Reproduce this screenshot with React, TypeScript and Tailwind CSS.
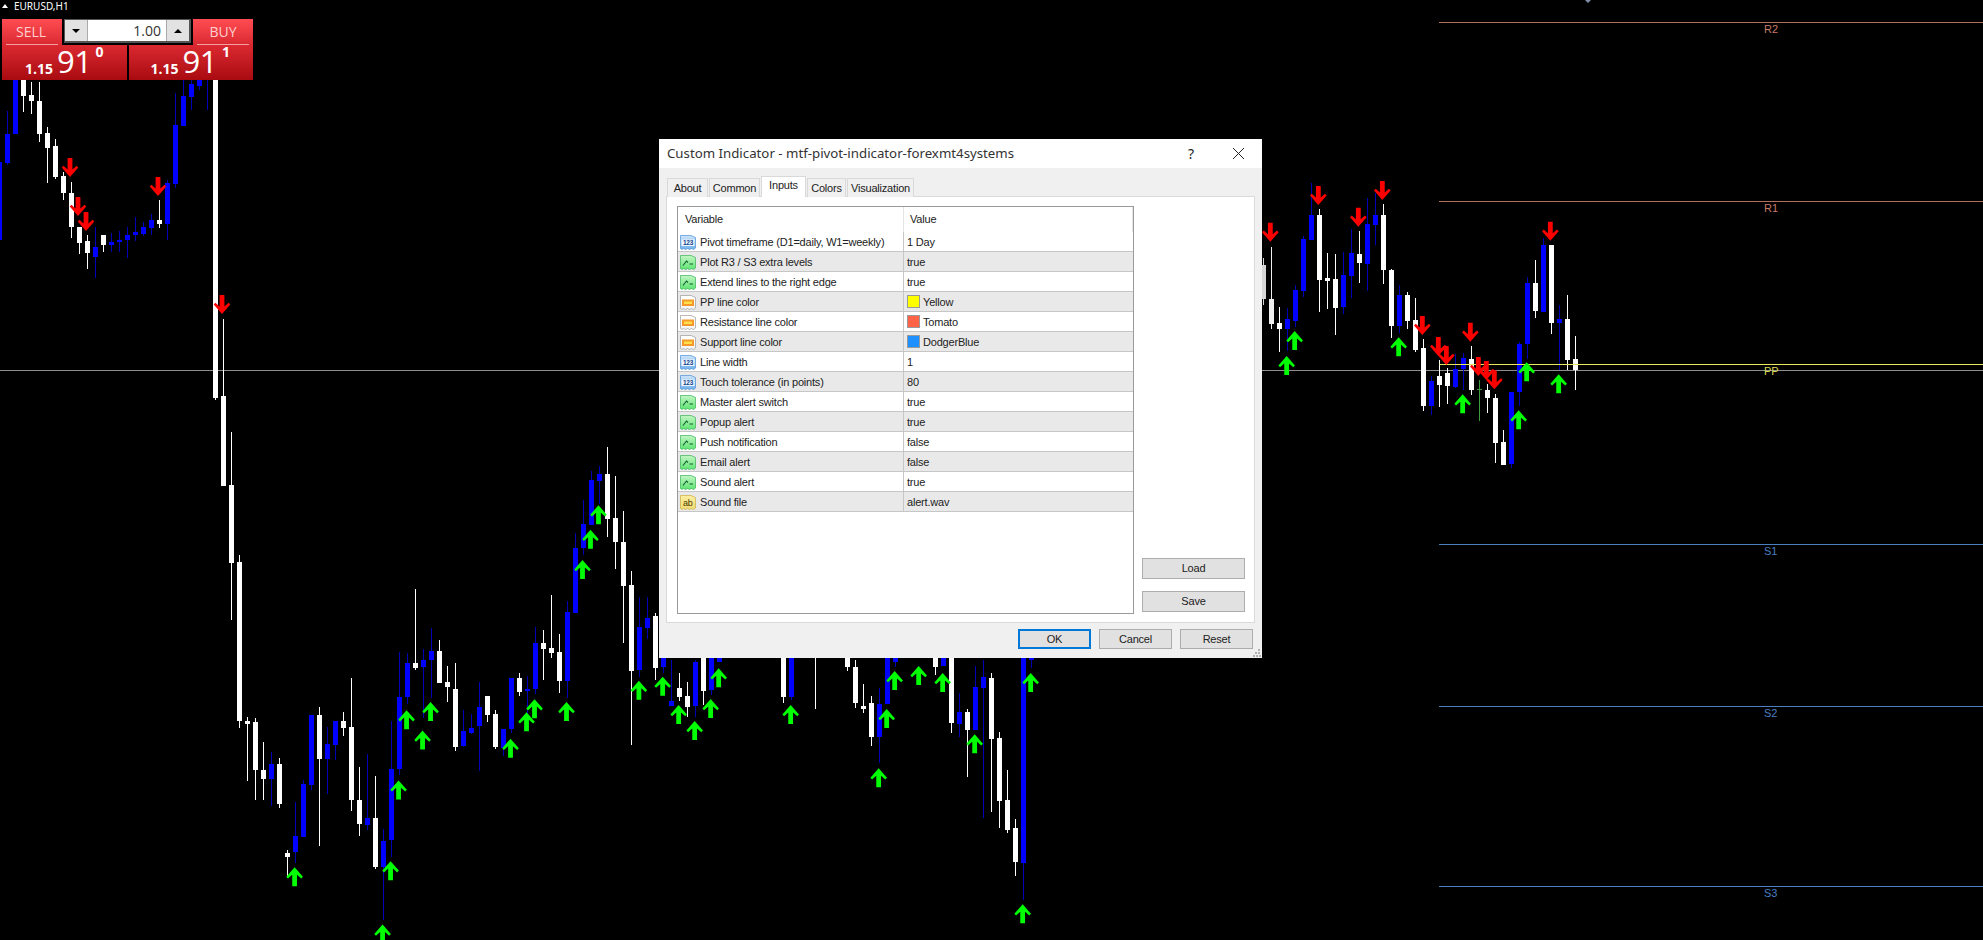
import React from "react";

type C = [number, string, number, number, number, number];

const cx = (n: number) => 8 * n - 3;

const real: C[] = [
  [0, "b", 162, 240, 160, 240],
  [1, "b", 134, 163, 111, 165],
  [2, "b", 80, 134, 80, 134],
  [3, "w", 80, 96, 80, 112],
  [4, "w", 95, 101, 82, 114],
  [5, "w", 101, 134, 82, 142],
  [6, "w", 133, 148, 127, 183],
  [7, "w", 146, 177, 139, 179],
  [8, "w", 176, 193, 172, 200],
  [9, "w", 193, 227, 182, 238],
  [10, "w", 227, 243, 227, 254],
  [11, "w", 241, 253, 235, 269],
  [12, "b", 247, 257, 227, 278],
  [13, "w", 235, 245, 235, 252],
  [14, "b", 242, 245, 233, 252],
  [15, "b", 240, 242, 231, 252],
  [16, "b", 235, 240, 227, 258],
  [17, "b", 232, 235, 217, 241],
  [18, "b", 227, 234, 222, 236],
  [19, "b", 220, 228, 214, 235],
  [20, "w", 220, 224, 200, 228],
  [21, "b", 183, 224, 180, 240],
  [22, "b", 125, 184, 93, 188],
  [23, "b", 96, 126, 80, 126],
  [24, "b", 84, 97, 80, 110],
  [25, "b", 80, 86, 80, 90],
  [26, "b", 78, 80, 80, 110],
  [27, "w", 70, 398, 70, 400],
  [83, "b", 655, 667, 655, 673],
  [84, "b", 701, 706, 660, 706],
  [85, "w", 688, 697, 673, 701],
  [86, "w", 696, 707, 682, 717],
  [87, "b", 662, 706, 660, 717],
  [88, "w", 655, 691, 655, 705],
  [89, "b", 655, 690, 655, 695],
  [90, "b", 655, 662, 655, 662],
  [98, "w", 655, 697, 655, 703],
  [99, "b", 655, 697, 655, 700],
  [102, "w", 655, 655, 655, 709],
  [106, "w", 655, 667, 655, 671],
  [107, "w", 667, 703, 660, 708],
  [108, "w", 706, 709, 684, 713],
  [109, "w", 703, 737, 696, 746],
  [110, "b", 704, 737, 688, 763],
  [111, "b", 655, 704, 655, 704],
  [112, "b", 655, 662, 655, 667],
  [117, "w", 655, 667, 655, 675],
  [118, "b", 655, 666, 655, 666],
  [119, "w", 655, 723, 655, 733],
  [120, "b", 712, 724, 693, 737],
  [121, "w", 712, 730, 709, 777],
  [122, "b", 687, 730, 666, 730],
  [123, "b", 677, 688, 660, 818],
  [124, "w", 678, 739, 673, 812],
  [125, "w", 738, 801, 732, 828],
  [126, "w", 800, 830, 770, 833],
  [127, "w", 828, 862, 819, 876],
  [128, "b", 655, 863, 655, 900],
  [129, "b", 655, 660, 655, 668],
];

const z6: C[] = [
  [28, "w", 235, 455, 47, 457],
  [29, "w", 453, 643, 323, 783],
  [30, "w", 643, 1033, 625, 1048],
  [31, "w", 1031, 1039, 1022, 1180],
  [32, "w", 1035, 1153, 1025, 1226],
  [33, "w", 1151, 1173, 1083, 1225],
  [34, "b", 1137, 1173, 1107, 1240],
  [35, "w", 1137, 1235, 1122, 1245],
  [36, "w", 1355, 1366, 1347, 1415],
  [37, "b", 1313, 1352, 1230, 1380],
  [38, "b", 1186, 1315, 1175, 1315],
  [39, "b", 1016, 1187, 1016, 1200],
  [40, "w", 1017, 1125, 997, 1337],
  [41, "b", 1088, 1125, 1045, 1208],
  [42, "b", 1032, 1090, 1032, 1127],
  [43, "w", 1032, 1048, 1010, 1070],
  [44, "w", 1047, 1226, 925, 1252],
  [45, "w", 1225, 1285, 1143, 1312],
  [46, "b", 1268, 1285, 1113, 1298],
  [47, "w", 1268, 1387, 1165, 1392],
  [48, "b", 1325, 1388, 1297, 1520],
  [49, "b", 1150, 1325, 1032, 1365],
  [50, "b", 973, 1150, 863, 1165],
  [51, "b", 890, 973, 865, 990],
  [52, "w", 890, 903, 707, 905],
  [53, "b", 883, 901, 855, 1025],
  [54, "b", 860, 883, 803, 975],
  [55, "w", 860, 938, 832, 938],
  [56, "w", 937, 950, 897, 985],
  [57, "w", 952, 1095, 890, 1105],
  [58, "b", 1057, 1093, 1005, 1095],
  [59, "b", 1048, 1060, 1015, 1065],
  [60, "b", 998, 1045, 937, 1155],
  [61, "w", 970, 1017, 970, 1033],
  [62, "w", 1015, 1097, 1005, 1100],
  [63, "b", 1050, 1097, 1050, 1115],
  [64, "b", 925, 1050, 925, 1060],
  [65, "w", 925, 960, 915, 972],
  [66, "b", 952, 958, 920, 1020],
  [67, "b", 840, 952, 800, 965],
  [68, "w", 840, 855, 808, 930],
  [69, "w", 853, 865, 723, 877],
  [70, "w", 862, 933, 818, 963],
  [71, "b", 765, 935, 737, 975],
  [72, "b", 608, 768, 572, 768],
  [73, "b", 550, 610, 490, 625],
  [74, "b", 440, 550, 418, 550],
  [75, "b", 427, 443, 407, 500],
  [76, "w", 427, 537, 360, 580],
  [77, "w", 535, 595, 430, 657],
  [78, "w", 593, 700, 517, 840],
  [79, "w", 698, 908, 665, 1092],
  [80, "b", 802, 908, 728, 925],
  [81, "b", 778, 803, 728, 830],
  [82, "w", 773, 900, 767, 930],
];

const z5: C[] = [
  [158, "g", 345, 447, 325, 465],
  [159, "h", 447, 522, 290, 537],
  [160, "w", 518, 537, 472, 608],
  [161, "b", 507, 537, 475, 605],
  [162, "b", 420, 513, 405, 530],
  [163, "b", 268, 423, 258, 440],
  [164, "b", 195, 270, 100, 270],
  [165, "w", 195, 390, 178, 488],
  [166, "w", 384, 393, 308, 477],
  [167, "w", 387, 473, 312, 555],
  [168, "b", 375, 471, 305, 490],
  [169, "b", 308, 378, 238, 445],
  [170, "w", 312, 338, 243, 398],
  [171, "b", 222, 342, 145, 425],
  [172, "b", 195, 225, 130, 285],
  [173, "w", 195, 360, 163, 402],
  [174, "w", 360, 528, 357, 565],
  [175, "b", 435, 528, 405, 550],
  [176, "w", 435, 513, 425, 537],
  [177, "w", 510, 600, 445, 608],
  [178, "w", 595, 768, 567, 783],
  [179, "b", 693, 768, 678, 795],
  [180, "w", 678, 705, 630, 770],
  [181, "w", 669, 708, 655, 762],
  [182, "b", 657, 711, 612, 715],
  [183, "b", 625, 657, 610, 720],
  [184, "w", 627, 720, 588, 735],
  [186, "w", 720, 744, 703, 790],
  [187, "w", 744, 878, 732, 938],
  [188, "w", 877, 945, 840, 945],
  [189, "b", 725, 942, 725, 952],
  [190, "b", 582, 727, 577, 768],
  [191, "b", 400, 582, 380, 625],
  [192, "w", 400, 483, 330, 503],
  [193, "b", 285, 487, 265, 487],
  [194, "w", 285, 518, 285, 552],
  [195, "b", 507, 519, 465, 660],
  [196, "w", 507, 630, 435, 660],
  [197, "w", 628, 662, 558, 720],
];

const fromZ6 = (z: number) => 300 + z / 2.45;
const fromZ5 = (z: number) => 150 + z / 3;

const candles: C[] = [
  ...real,
  ...z6.map((c): C => [c[0], c[1], fromZ6(c[2]), fromZ6(c[3]), fromZ6(c[4]), fromZ6(c[5])]),
  ...z5.map((c): C => [c[0], c[1], fromZ5(c[2]), fromZ5(c[3]), fromZ5(c[4]), fromZ5(c[5])]),
];

const bodyColor: Record<string, string> = { w: "#ffffff", b: "#0000ff", g: "#d6d6d6", h: "#efefef" };
const wickColor: Record<string, string> = { w: "#ffffff", b: "#0000b4", g: "#d6d6d6", h: "#efefef" };

const greens: [number, number][] = [
  ...([
    [700, 1390], [928, 1375], [909, 1530], [947, 1177], [966, 1005], [1004, 1055], [1023, 985],
    [1213, 1075], [1251, 1010], [1270, 978], [1346, 985], [1384, 637], [1403, 563], [1422, 503], [1518, 933],
  ] as [number, number][]).map(([x, y]): [number, number] => [x / 2.376, fromZ6(y)]),
  ...([
    [68, 110], [116, 195], [164, 243], [212, 177], [236, 85], [452, 195], [716, 385], [740, 207],
    [764, 93], [836, 78], [908, 99], [1004, 283], [1172, 99], [1148, 793],
  ] as [number, number][]).map(([x, y]): [number, number] => [640 + x / 3, 640 + y / 3]),
  ...([
    [110, 618], [134, 543], [446, 562], [638, 733], [806, 781], [830, 637], [926, 673],
  ] as [number, number][]).map(([x, y]): [number, number] => [1250 + x / 3, 150 + y / 3]),
];

const reds: [number, number][] = [
  [70, 177], [78, 216], [86, 231], [158, 196], [222, 314],
  ...([
    [61, 275], [205, 165], [325, 230], [397, 150], [517, 555], [565, 618], [589, 645], [661, 575],
    [685, 678], [709, 690], [733, 718], [901, 272],
  ] as [number, number][]).map(([x, y]): [number, number] => [1250 + x / 3, 150 + y / 3]),
];

const ARROW = "0,0 8.3,9.4 6.6,11.2 2.4,7.4 2.4,19 -2.4,19 -2.4,7.4 -6.6,11.2 -8.3,9.4";

const levels = [
  { y: 22, c: "#b4705f", label: "R2", lc: "#c87a66", ly: 29 },
  { y: 201, c: "#b4705f", label: "R1", lc: "#c87a66", ly: 208 },
  { y: 544, c: "#4a7fc0", label: "S1", lc: "#4a7fc0", ly: 551 },
  { y: 706, c: "#4a7fc0", label: "S2", lc: "#4a7fc0", ly: 713 },
  { y: 886, c: "#4a7fc0", label: "S3", lc: "#4a7fc0", ly: 893 },
];

function Chart() {
  return (
    <svg className="absolute inset-0" width={1983} height={940} viewBox="0 0 1983 940">
      <rect x={0} y={370} width={1983} height={1} fill="#8e8e8e" shapeRendering="crispEdges" />
      <g shapeRendering="crispEdges">
        {candles.map((c) => (
          <g key={c[0]}>
            <rect x={cx(c[0]) + 2} y={Math.round(c[4])} width={1} height={Math.round(c[5] - c[4])} fill={wickColor[c[1]]} />
            <rect x={cx(c[0])} y={Math.round(c[2])} width={5} height={Math.round(c[3] - c[2])} fill={bodyColor[c[1]]} />
          </g>
        ))}
        <rect x={1479} y={380} width={1} height={41} fill="#3c9c3c" />
        <rect x={1477} y={389} width={5} height={1} fill="#3c9c3c" />
        {levels.map((l) => (
          <rect key={l.label} x={1439} y={l.y} width={544} height={1} fill={l.c} />
        ))}
        <rect x={1439} y={364} width={544} height={1} fill="#e8e85c" />
      </g>
      {greens.map(([x, y], i) => (
        <polygon key={i} points={ARROW} fill="#00ff00" transform={`translate(${x} ${y})`} />
      ))}
      {reds.map(([x, y], i) => (
        <polygon key={i} points={ARROW} fill="#ff0000" transform={`translate(${x} ${y}) scale(1 -1)`} />
      ))}
      <polygon points="1585,0 1591,0 1588,3" fill="#8090a8" />
      {levels.map((l) => (
        <text key={l.label} x={1764} y={l.ly + 4} fontSize={11} fill={l.lc} fontFamily="Liberation Sans, sans-serif">
          {l.label}
        </text>
      ))}
      <text x={1764} y={375} fontSize={11} fill="#dcdc50" fontFamily="Liberation Sans, sans-serif">
        PP
      </text>
    </svg>
  );
}

function TradePanel() {
  return (
    <div className="absolute left-[2px] top-[19px] w-[251px] flex flex-col font-['Open_Sans',sans-serif]">
      <div className="flex h-[26px] items-start">
        <div className="w-[60px] h-[26px] bg-gradient-to-b from-[#ff4c52] to-[#d92830] text-[#ffd0d0] text-[14px] leading-[25px] text-center">
          <div className="mx-[4px] h-[26px] border-b border-[#f4a0a0] pr-[2px]">SELL</div>
        </div>
        <div className="ml-[2px] w-[127px] h-[24px] flex border-r-2 border-b-2 border-t border-l border-[#555] bg-white">
          <div className="w-[23px] bg-[#e2e2e2] border-r border-[#aaa] flex items-center justify-center">
            <div className="w-0 h-0 border-x-[4px] border-x-transparent border-t-[4px] border-t-black" />
          </div>
          <div className="flex-1 text-right pr-[5px] text-[14px] leading-[22px] text-[#333]">1.00</div>
          <div className="w-[23px] bg-[#e2e2e2] border-l border-[#aaa] flex items-center justify-center">
            <div className="w-0 h-0 border-x-[4px] border-x-transparent border-b-[4px] border-b-black" />
          </div>
        </div>
        <div className="ml-[2px] w-[60px] h-[26px] bg-gradient-to-b from-[#ff4c52] to-[#d92830] text-[#ffd0d0] text-[14px] leading-[25px] text-center">
          <div className="mx-[4px] h-[26px] border-b border-[#f4a0a0]">BUY</div>
        </div>
      </div>
      <div className="flex gap-[2px] h-[35px]">
        {[
          ["0", "pl-[23px]", "ml-[4px]"],
          ["1", "pl-[22px]", "ml-[5px]"],
        ].map(([sup, pad, gap]) => (
          <div key={sup} className={`w-[125px] h-[35px] bg-gradient-to-b from-[#dc2830] to-[#a80a10] text-white flex items-end pb-[1px] ${pad}`}>
            <span className="text-[14px] font-bold leading-[20px] mr-[4px]">1.15</span>
            <span className="text-[31px] leading-[35px] tracking-[-0.5px]">91</span>
            <span className={`text-[14px] font-bold leading-[16px] self-start mt-[-1px] ${gap}`}>{sup}</span>
          </div>
        ))}
      </div>
    </div>
  );
}

function Tag({ fill, stroke, id, children }: { fill: [string, string]; stroke: string; id: string; children: React.ReactNode }) {
  return (
    <svg width={16} height={16} viewBox="0 0 16 16" className="shrink-0">
      <defs>
        <linearGradient id={id} x1="0" y1="0" x2="0" y2="1">
          <stop offset="0" stopColor={fill[0]} />
          <stop offset="1" stopColor={fill[1]} />
        </linearGradient>
      </defs>
      <path
        d="M0.5 1.5 H11 L15.5 3.5 V14 L13.5 15.5 L11.5 14.5 L9.5 15.5 L7.5 14.5 L5.5 15.5 L3.5 14.5 L2 15.5 L0.5 14.5 Z"
        fill={`url(#${id})`}
        stroke={stroke}
        strokeWidth={0.7}
      />
      {children}
    </svg>
  );
}

function RowIcon({ kind, i }: { kind: string; i: number }) {
  if (kind === "n")
    return (
      <Tag id={`n${i}`} fill={["#cfe4fa", "#6fb0ec"]} stroke="#4a90d4">
        <rect x={1.5} y={5.5} width={13} height={6.5} fill="#eef6fe" />
        <text x={8} y={11} fontSize={6.5} fontWeight={700} textAnchor="middle" fill="#14458c" fontFamily="Liberation Sans, sans-serif">
          123
        </text>
      </Tag>
    );
  if (kind === "b")
    return (
      <Tag id={`b${i}`} fill={["#c4f6c4", "#5ce472"]} stroke="#38b058">
        <path d="M3 11.5 L6.5 7 L8 8.5 M9.5 10 H13" stroke="#0f5f2f" strokeWidth={1.1} fill="none" />
      </Tag>
    );
  if (kind === "c")
    return (
      <Tag id={`c${i}`} fill={["#ffffff", "#f4f4f4"]} stroke="#9a9a9a">
        <rect x={2} y={5.5} width={12} height={6.5} fill="#f59a2a" />
        <rect x={4} y={7.5} width={8} height={2.5} fill="#ffe04a" />
      </Tag>
    );
  return (
    <Tag id={`s${i}`} fill={["#fbeea0", "#f0dc74"]} stroke="#c8ac40">
      <text x={7.8} y={11.5} fontSize={9} textAnchor="middle" fill="#4d3b00" fontFamily="Liberation Sans, sans-serif">
        ab
      </text>
    </Tag>
  );
}

const rows: { k: string; name: string; val: string; sw?: string }[] = [
  { k: "n", name: "Pivot timeframe (D1=daily, W1=weekly)", val: "1 Day" },
  { k: "b", name: "Plot R3 / S3 extra levels", val: "true" },
  { k: "b", name: "Extend lines to the right edge", val: "true" },
  { k: "c", name: "PP line color", val: "Yellow", sw: "bg-[#ffff00]" },
  { k: "c", name: "Resistance line color", val: "Tomato", sw: "bg-[#ff6347]" },
  { k: "c", name: "Support line color", val: "DodgerBlue", sw: "bg-[#1e90ff]" },
  { k: "n", name: "Line width", val: "1" },
  { k: "n", name: "Touch tolerance (in points)", val: "80" },
  { k: "b", name: "Master alert switch", val: "true" },
  { k: "b", name: "Popup alert", val: "true" },
  { k: "b", name: "Push notification", val: "false" },
  { k: "b", name: "Email alert", val: "false" },
  { k: "b", name: "Sound alert", val: "true" },
  { k: "s", name: "Sound file", val: "alert.wav" },
];

const tabs = [
  { t: "About", w: "w-[41px]" },
  { t: "Common", w: "w-[51px]" },
  { t: "Inputs", w: "w-[45px]", on: true },
  { t: "Colors", w: "w-[39px]" },
  { t: "Visualization", w: "w-[67px]" },
];

function Dialog() {
  return (
    <div className="absolute left-[659px] top-[139px] w-[603px] h-[519px] flex flex-col bg-[#f0f0f0] text-[#222] font-['Liberation_Sans',sans-serif] text-[11px] tracking-[-0.2px]">
      <div className="h-[29px] bg-white flex items-center pl-[8px] text-[#333] text-[13.25px] tracking-normal font-['Noto_Sans',sans-serif] shrink-0">
        <span className="flex-1 truncate">Custom Indicator - mtf-pivot-indicator-forexmt4systems</span>
        <span className="text-[14px] mr-[38px] text-[#222]">?</span>
        <svg width={13} height={13} viewBox="0 0 13 13" className="mr-[17px]">
          <path d="M1 1 L12 12 M12 1 L1 12" stroke="#222" strokeWidth={1} fill="none" />
        </svg>
      </div>
      <div className="flex items-end h-[21px] mt-[8px] ml-[8px] gap-px relative z-10 shrink-0">
        {tabs.map((t) => (
          <div
            key={t.t}
            className={
              t.on
                ? `${t.w} h-[21px] bg-white border border-b-0 border-[#d9d9d9] text-center leading-[17px]`
                : `${t.w} h-[19px] bg-[#f0f0f0] border border-b-0 border-[#d9d9d9] text-center leading-[19px]`
            }
          >
            {t.t}
          </div>
        ))}
      </div>
      <div className="mx-[7px] h-[427px] mt-[-1px] bg-white border border-[#d9d9d9] flex pl-[10px] pt-[9px] pb-[9px] shrink-0">
        <div className="w-[457px] h-[408px] border border-[#9a9a9a] shrink-0 flex flex-col">
          <div className="h-[25px] flex items-center shrink-0">
            <div className="w-[226px] pl-[7px] border-r border-[#e4e4e4] h-full flex items-center">Variable</div>
            <div className="flex-1 pl-[6px] border-r border-[#e4e4e4] h-full flex items-center">Value</div>
          </div>
          {rows.map((r, i) => (
            <div key={r.name} className={`h-[20px] flex items-center border-b border-[#c6c6c6] shrink-0 ${i % 2 ? "bg-[#e9e9e9]" : "bg-white"}`}>
              <div className="w-[226px] h-full flex items-center pl-[2px] border-r border-[#c6c6c6] shrink-0">
                <RowIcon kind={r.k} i={i} />
                <span className="ml-[4px] pt-[1px] whitespace-nowrap">{r.name}</span>
              </div>
              <div className="flex-1 h-full flex items-center pl-[3px]">
                {r.sw && <span className={`w-[13px] h-[13px] border border-[#999] mr-[3px] ${r.sw}`} />}
                <span className="pt-[1px]">{r.val}</span>
              </div>
            </div>
          ))}
        </div>
        <div className="ml-[8px] w-[103px] flex flex-col justify-end gap-[12px] pb-[1px]">
          <div className="h-[21px] bg-[#e1e1e1] border border-[#adadad] text-center leading-[19px]">Load</div>
          <div className="h-[21px] bg-[#e1e1e1] border border-[#adadad] text-center leading-[19px]">Save</div>
        </div>
      </div>
      <div className="flex justify-end gap-[8px] pr-[9px] mt-[6px] shrink-0">
        <div className="w-[73px] h-[20px] bg-[#e1e1e1] border-2 border-[#0078d7] text-center leading-[16px]">OK</div>
        <div className="w-[73px] h-[20px] bg-[#e1e1e1] border border-[#adadad] text-center leading-[18px]">Cancel</div>
        <div className="w-[73px] h-[20px] bg-[#e1e1e1] border border-[#adadad] text-center leading-[18px]">Reset</div>
      </div>
      <svg width={8} height={8} viewBox="0 0 8 8" className="absolute right-[1px] bottom-[1px]">
        <g fill="#b0b0b0">
          <rect x={5} y={0} width={2} height={2} />
          <rect x={2} y={3} width={2} height={2} />
          <rect x={5} y={3} width={2} height={2} />
          <rect x={0} y={6} width={2} height={2} />
          <rect x={3} y={6} width={2} height={2} />
          <rect x={6} y={6} width={2} height={2} />
        </g>
      </svg>
    </div>
  );
}

export default function App() {
  return (
    <div className="relative w-[1983px] h-[940px] bg-black overflow-hidden">
      <Chart />
      <div className="absolute left-[2px] top-0 h-[12px] flex items-center text-white text-[10px] leading-[12px] font-['Noto_Sans',sans-serif] gap-[6px]">
        <div className="w-0 h-0 border-x-[3.5px] border-x-transparent border-b-[4px] border-b-white" />
        <span>EURUSD,H1</span>
      </div>
      <TradePanel />
      <Dialog />
    </div>
  );
}
